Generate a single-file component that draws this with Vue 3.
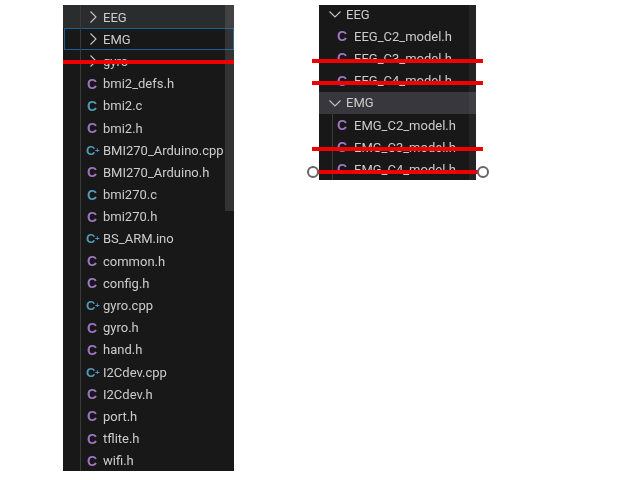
<script setup>
const leftFolders = [
  { name: 'EEG', hovered: true },
  { name: 'EMG', focused: true },
  { name: 'gyro' },
]
const leftFiles = [
  { name: 'bmi2_defs.h', type: 'h' },
  { name: 'bmi2.c', type: 'c' },
  { name: 'bmi2.h', type: 'h' },
  { name: 'BMI270_Arduino.cpp', type: 'cpp' },
  { name: 'BMI270_Arduino.h', type: 'h' },
  { name: 'bmi270.c', type: 'c' },
  { name: 'bmi270.h', type: 'h' },
  { name: 'BS_ARM.ino', type: 'cpp' },
  { name: 'common.h', type: 'h' },
  { name: 'config.h', type: 'h' },
  { name: 'gyro.cpp', type: 'cpp' },
  { name: 'gyro.h', type: 'h' },
  { name: 'hand.h', type: 'h' },
  { name: 'I2Cdev.cpp', type: 'cpp' },
  { name: 'I2Cdev.h', type: 'h' },
  { name: 'port.h', type: 'h' },
  { name: 'tflite.h', type: 'h' },
  { name: 'wifi.h', type: 'h' },
]
const rightGroups = [
  { name: 'EEG', files: ['EEG_C2_model.h', 'EEG_C3_model.h', 'EEG_C4_model.h'] },
  { name: 'EMG', active: true, files: ['EMG_C2_model.h', 'EMG_C3_model.h', 'EMG_C4_model.h'] },
]
</script>

<template>
  <div class="page">
    <div class="panel left">
      <div class="guide"></div>
      <div class="scrollbar"></div>
      <div
        v-for="f in leftFolders"
        :key="f.name"
        class="row folder"
        :class="{ hovered: f.hovered, focused: f.focused }"
      >
        <svg class="chev" width="16" height="16" viewBox="0 0 16 16">
          <path d="M4.5 2.5 L10 8 L4.5 13.5" fill="none" stroke="#c5c5c5" stroke-width="1.1" />
        </svg>
        <span class="label">{{ f.name }}</span>
      </div>
      <div v-for="f in leftFiles" :key="f.name" class="row file">
        <span class="icon" :class="f.type">C<i v-if="f.type === 'cpp'">+</i></span>
        <span class="label">{{ f.name }}</span>
      </div>
      <div class="redline left-line"></div>
    </div>

    <div class="panel right">
      <div class="tree">
        <div class="rows">
          <template v-for="g in rightGroups" :key="g.name">
            <div class="row rfolder" :class="{ active: g.active }">
              <svg class="chev" width="16" height="16" viewBox="0 0 16 16">
                <path d="M2.5 5.5 L8 11 L13.5 5.5" fill="none" stroke="#c5c5c5" stroke-width="1.1" />
              </svg>
              <span class="label">{{ g.name }}</span>
            </div>
            <div class="group" :class="{ guided: g.active }">
              <div v-for="f in g.files" :key="f" class="row rfile">
                <span class="icon h">C</span>
                <span class="label">{{ f }}</span>
              </div>
            </div>
          </template>
        </div>
        <div class="scrollbar"></div>
      </div>
      <div class="redline r1"></div>
      <div class="redline r2"></div>
      <div class="redline r3"></div>
      <div class="redline r4"></div>
      <div class="handle hl"></div>
      <div class="handle hr"></div>
    </div>
  </div>
</template>

<style>
html, body {
  margin: 0;
  background: #fff;
}
</style>

<style scoped>
.page {
  display: flex;
  align-items: flex-start;
  gap: 85px;
  width: 640px;
  height: 480px;
  padding: 5px 0 0 63px;
  box-sizing: border-box;
  background: #fff;
  font-family: Roboto, "Noto Sans", sans-serif;
  font-size: 13px;
  overflow: hidden;
}
.panel {
  position: relative;
  background: #181818;
  color: #cccccc;
  filter: blur(0.3px);
}
.left {
  width: 171px;
  height: 466px;
  padding-top: 1px;
  box-sizing: border-box;
}
.right {
  width: 157px;
  height: 175px;
}
.tree {
  position: relative;
  height: 175px;
  overflow: hidden;
}
.rows {
  margin-top: -2px;
}
.row {
  display: flex;
  align-items: center;
  box-sizing: border-box;
  height: 22.2px;
  white-space: nowrap;
}
.label {
  line-height: 1;
}
.folder {
  padding-left: 23px;
}
.folder .chev {
  margin-right: 1px;
}
.hovered {
  margin-top: -1px;
  padding-top: 1px;
  height: 23.2px;
  background: #2a2d2e;
}
.focused {
  outline: 1px solid #1c5f92;
  outline-offset: -1px;
  margin-left: 1px;
  padding-left: 22px;
}
.file {
  padding-left: 24px;
}
.icon {
  position: relative;
  width: 16px;
  font-family: "Liberation Sans", sans-serif;
  font-weight: 700;
  font-size: 14px;
}
.icon.h {
  color: #a074c4;
}
.icon.c,
.icon.cpp {
  color: #519aba;
}
.icon.cpp {
  font-size: 13px;
  left: -1px;
}
.icon i {
  position: absolute;
  left: 9px;
  top: 3px;
  font-style: normal;
  font-size: 8px;
}
.guide {
  position: absolute;
  left: 17px;
  top: 0;
  bottom: 0;
  width: 1px;
  background: #3a3a3a;
}
.scrollbar {
  position: absolute;
  top: 0;
  right: 0;
  width: 9px;
  height: 206px;
  background: rgba(121, 121, 121, 0.28);
}
.right .scrollbar {
  width: 7px;
  height: 175px;
  background: rgba(121, 121, 121, 0.12);
}
.rfolder {
  padding-left: 8px;
}
.rfolder .label {
  margin-left: 3px;
}
.active {
  background: #37373d;
}
.group {
  position: relative;
}
.guided::before {
  content: "";
  position: absolute;
  left: 13px;
  top: 0;
  bottom: 0;
  width: 1px;
  background: #3a3a3a;
}
.rfile {
  padding-left: 18px;
}
.rfile .icon {
  width: 17px;
}
.redline {
  position: absolute;
  height: 4px;
  background: #f00000;
}
.left-line {
  left: 0;
  width: 171px;
  top: 54.5px;
}
.r1 { left: -7px; width: 171px; top: 54px; }
.r2 { left: -7px; width: 171px; top: 75.5px; }
.r3 { left: -7px; width: 171px; top: 141.5px; }
.r4 { left: -2px; width: 162px; top: 164.5px; }
.handle {
  position: absolute;
  top: 161px;
  width: 8px;
  height: 8px;
  border: 2px solid #666;
  border-radius: 50%;
  background: #fff;
}
.hl { left: -12px; }
.hr { right: -13px; }
</style>
